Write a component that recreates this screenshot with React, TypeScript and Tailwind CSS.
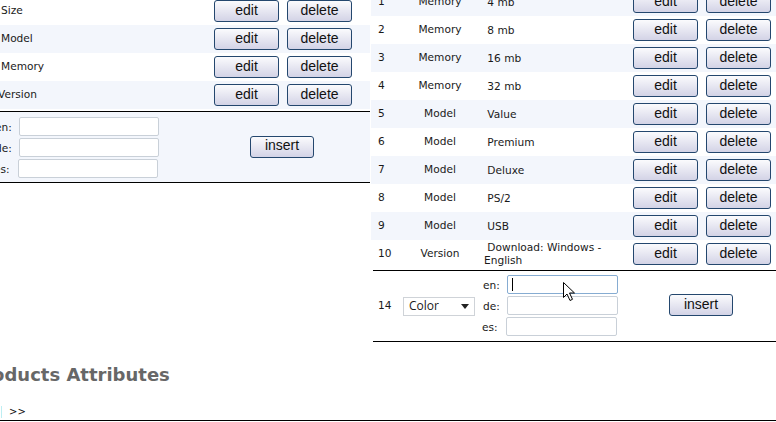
import React from 'react';

type Row = { id: number; type: string; value: string };

const leftRows = ['Size', 'Model', 'Memory', 'Version'];

const rightRows: Row[] = [
  { id: 1, type: 'Memory', value: '4 mb' },
  { id: 2, type: 'Memory', value: '8 mb' },
  { id: 3, type: 'Memory', value: '16 mb' },
  { id: 4, type: 'Memory', value: '32 mb' },
  { id: 5, type: 'Model', value: 'Value' },
  { id: 6, type: 'Model', value: 'Premium' },
  { id: 7, type: 'Model', value: 'Deluxe' },
  { id: 8, type: 'Model', value: 'PS/2' },
  { id: 9, type: 'Model', value: 'USB' },
  { id: 10, type: 'Version', value: 'Download: Windows - English' },
];

function Btn({ label, w = 'w-[65px]' }: { label: string; w?: string }) {
  return (
    <button
      className={`${w} h-[22px] shrink-0 rounded-[3px] border border-[#24476e] bg-linear-to-b from-[#fbfbfd] to-[#d3d3e6] pb-[3px] font-['Liberation_Sans',Arial,sans-serif] text-[14px] leading-none text-[#111]`}
    >
      {label}
    </button>
  );
}

function Field({ label, w, focus = false }: { label: string; w: string; focus?: boolean }) {
  return (
    <div className="flex h-[21px] items-start">
      <span className="w-[24px] shrink-0 pt-[4px] leading-[13px]">{label}</span>
      <div className="relative">
        <input
          readOnly
          className={`${w} h-[19px] rounded-[2px] border bg-white outline-none ${
            focus ? 'border-[#86acd2]' : 'border-[#c9d0d8]'
          }`}
        />
        {focus && <span className="absolute left-[5px] top-[3px] h-[13px] w-px bg-black" />}
      </div>
    </div>
  );
}

export default function App() {
  return (
    <div className="relative h-[422px] w-[776px] overflow-hidden bg-white font-['DejaVu_Sans',Verdana,sans-serif] text-[10.6px] text-[#1a1a1a]">
      <div className="-mt-[12px] flex items-start">
        {/* categories */}
        <div className="mt-[9px] w-[370px] shrink-0">
          {leftRows.map((name, i) => (
            <div key={name} className={`flex h-[28px] items-center ${i % 2 ? 'bg-[#f3f6fc]' : ''}`}>
              <span className={`w-[214px] shrink-0 ${name === 'Version' ? 'indent-[-2px]' : 'pl-[1px]'}`}>{name}</span>
              <Btn label="edit" />
              <div className="w-[8px] shrink-0" />
              <Btn label="delete" />
            </div>
          ))}
          <div className="h-[2px]" />
          <div className="flex h-[72px] items-center border-y border-black bg-[#f3f6fc]">
            <div className="-ml-[5px] flex flex-col pt-[3px]">
              <Field label="en:" w="w-[140px]" />
              <Field label="de:" w="w-[140px]" />
              <div className="-ml-[1px]">
                <Field label="es:" w="w-[140px]" />
              </div>
            </div>
            <div className="ml-[91px] -mt-[1px]">
              <Btn label="insert" w="w-[64px]" />
            </div>
          </div>
        </div>

        {/* values */}
        <div className="ml-[1px] w-[405px] shrink-0">
          {rightRows.map((r, i) => (
            <div key={r.id} className={`flex h-[28px] items-center ${i % 2 ? '' : 'bg-[#f3f6fc]'}`}>
              <span className="w-[38px] shrink-0 pl-[7px]">{r.id}</span>
              <span className="w-[62px] shrink-0 text-center">{r.type}</span>
              <span className="w-[162px] shrink-0 pl-[13px] pr-[6px] leading-[13px]">{'\u00a0' + r.value}</span>
              <Btn label="edit" />
              <div className="w-[8px] shrink-0" />
              <Btn label="delete" />
            </div>
          ))}
          <div className="h-[2px]" />
          <div className="relative ml-[2px] flex h-[72px] items-center border-y border-black">
            <span className="w-[30px] shrink-0 pl-[5px]">14</span>
            <div className="flex h-[19px] w-[72px] shrink-0 items-center justify-between border border-[#cfd3d8] bg-white pl-[5px] pr-[5px] font-['Open_Sans',Tahoma,sans-serif] text-[12px]">
              <span className="leading-none">Color</span>
              <svg width="8" height="5" viewBox="0 0 8 5">
                <path d="M0 0h8L4 5z" fill="#222" />
              </svg>
            </div>
            <div className="ml-[8px] flex flex-col pt-[1px]">
              <Field label="en:" w="w-[111px]" focus />
              <Field label="de:" w="w-[111px]" />
              <div className="-ml-[1px]">
                <Field label="es:" w="w-[111px]" />
              </div>
            </div>
            <div className="ml-[51px] -mt-[2px]">
              <Btn label="insert" w="w-[64px]" />
            </div>
            {/* mouse pointer */}
            <svg className="absolute left-[190px] top-[11px]" width="13" height="20" viewBox="0 0 13 20">
              <path d="M0.5 0.5v15l3.5-3.5 3 6.5 2.5-1.2-3-6.3h5z" fill="#fff" stroke="#000" strokeWidth="1" />
            </svg>
          </div>
        </div>
      </div>

      <h2 className="mt-[22px] -ml-[30px] whitespace-nowrap text-[18px] font-bold leading-[21px] text-[#676767]">
        Products Attributes
      </h2>
      <div className="mt-[20px] flex h-[13px] items-center pl-[1px]">
        <span className="h-[12px] w-px bg-[#bdeef2]" />
        <span className="ml-[7px] text-[10px] leading-[13px] text-[#111]">&gt;&gt;</span>
      </div>
      <div className="mt-[2px] border-t border-black" />
    </div>
  );
}
